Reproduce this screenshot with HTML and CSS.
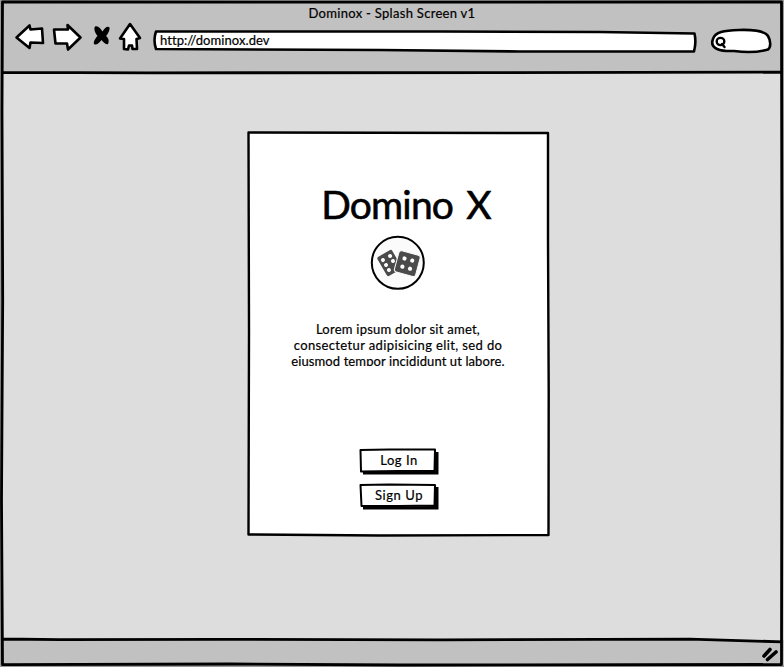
FILE: index.html
```html
<!DOCTYPE html>
<html lang="en">
<head>
<meta charset="utf-8">
<title>Dominox - Splash Screen v1</title>
<link rel="stylesheet" href="styles.css">
</head>
<body>
<div class="browser">
  <header class="chrome">
    <div class="window-title"><span>Dominox - Splash Screen v1</span></div>
    <div class="toolbar">
      <svg class="nav" width="144" height="34" viewBox="10 20 144 34">
        <g class="ink fill">
          <path d="M16.500 37.500 L29.500 25.500 L30.500 29.500 L42 28.500 L43 43 L30.500 42.500 L29.500 48 Z"/>
          <path d="M54 29.500 L68 29.500 L67.500 25 L80.500 37.500 L68 49.500 L67 43.500 L55.500 43.500 Z"/>
          <path d="M130 24 L140 38 L136.500 39 L137 49 L132.500 49 L132 45.500 L129 45.500 L128 49.500 L124 49 L124 39 L120 38.500 Z"/>
        </g>
        <path d="M95 26.500 C98 25 101 29 102.500 31.500 C105 27 108 25.500 109.500 27.500 C110 30 108 34 106 36 C108.500 38 109.500 41 108 44 C105.500 45 103.500 42 101.500 40 C99 43.500 96 45.500 94 44 C93 42 95.500 38 97.500 36 C95 33 93.500 29 95 26.500 Z"/>
      </svg>
      <div class="address">
        <svg class="sketch" width="546" height="26" viewBox="152 29 546 26">
          <path class="ink fill" d="M156 31.500 L440 31.500 L600 32 L694.500 33.500 Q696.500 42 694 51.500 L520 51.500 L380 50 L156 49 Q153 40 156 31.500 Z"/>
        </svg>
        <span class="url">http://dominox.dev</span>
      </div>
      <svg class="search" width="64" height="30" viewBox="710 27 64 30">
        <path class="ink fill" d="M713 39 C715 32 724 30.500 739 30 C755 29.500 765 31 768 36 C771 41 771 47 768 49.500 C758 52.500 745 52.500 734 51 C721 51.500 709 49 713 39 Z"/>
        <g class="lens"><ellipse cx="720.500" cy="41.500" rx="3.800" ry="3.600"/><path d="M722 44 L724.500 47"/></g>
      </svg>
    </div>
  </header>
  <main class="page">
    <section class="card">
      <svg class="sketch" width="304" height="406" viewBox="246 131 304 406">
        <path class="ink card-line" d="M248.500 132.500 L380 132.700 L548 133 L548 240 L548.700 390 L548.500 535 L380 535.500 L248.500 534.500 L249 330 Z"/>
      </svg>
      <h1>Domino X</h1>
      <svg class="logo" width="56" height="56" viewBox="370 235 56 56">
        <circle cx="397.800" cy="262.800" r="26" fill="#fbfbfb" stroke="#000" stroke-width="2"/>
        <g transform="translate(389.500 263) rotate(-30)"><rect class="die" x="-8.500" y="-11" width="17" height="22" rx="2"/>
          <g class="pip"><circle cx="-4.200" cy="-5.800" r="2"/><circle cx="4" cy="-5.800" r="2"/><circle cx="-4" cy="0" r="2"/><circle cx="4" cy="0" r="2"/><circle cx="-4" cy="5.800" r="2"/></g></g>
        <g transform="translate(407.300 263.600) rotate(15)"><rect class="die front" x="-11" y="-11" width="22" height="22" rx="2.500"/>
          <g class="pip"><circle cx="-4" cy="-4.200" r="2.100"/><circle cx="4" cy="-4.200" r="2.100"/><circle cx="-4" cy="4.200" r="2.100"/><circle cx="4" cy="4.200" r="2.100"/></g></g>
      </svg>
      <p class="intro">
        <span class="l1">Lorem ipsum dolor sit amet,</span>
        <span class="l2">consectetur adipisicing elit, sed do</span>
        <span class="l3">eiusmod tempor incididunt ut labore.</span>
      </p>
      <div class="actions">
        <button class="btn" type="button">
          <svg class="sketch" width="82" height="28" viewBox="0 0 82 28"><path d="M4 24 L76 23 L76 4 L79.500 4 L79.500 26.500 L4 26.500 Z"/><path class="btn-line" d="M1.500 2 L30 1.500 L76 1.500 L75.500 23 L40 23 L2 23.500 Z"/></svg>
          <span class="login">Log In</span>
        </button>
        <button class="btn" type="button">
          <svg class="sketch" width="82" height="28" viewBox="0 0 82 28"><path d="M4 24 L76 23 L76 4 L79.500 4 L79.500 26.500 L4 26.500 Z"/><path class="btn-line" d="M1.500 2 L30 1.500 L76 2 L75.500 22.500 L40 23 L2.500 23 Z"/></svg>
          <span class="signup">Sign Up</span>
        </button>
      </div>
    </section>
  </main>
  <footer class="status">
    <svg width="18" height="16" viewBox="761 647 18 16"><path class="grip" d="M764 656 L770 649.500 M767.500 659.500 L776 652"/></svg>
  </footer>
  <svg class="sketch" width="784" height="667" viewBox="0 0 784 667">
    <path class="edge" d="M0 0 H784 V667 H0 Z M2 2 V665 L784 665 L782 2 Z"/>
    <path class="ink frame" d="M2.500 2 L430 2.200 L781.500 2 L782 330 L781.500 664.500 L400 665 L230 664 L2.500 664.700 L1.500 500 L2.700 300 L2 110 Z M2.500 72.300 L150 72.800 L500 72.600 L781.500 72.200 M2.500 639 L60 639.600 L220 639.300 L440 639.800 L690 639.200 L781.500 641.800"/>
  </svg>
</div>
</body>
</html>
```
FILE: styles.css
```css
* { box-sizing: border-box; }
body { margin: 0; color: #000; font: 13px/16px Lato, "Liberation Sans", sans-serif; -webkit-text-stroke: .2px #000; overflow: hidden; }
.browser { position: relative; display: grid; grid-template-rows: 73px 1fr 27px; width: 784px; height: 667px; background: #ddd; }
.sketch { position: absolute; left: 0; top: 0; pointer-events: none; }
.ink { fill: none; stroke: #000; stroke-width: 2.6; stroke-linejoin: round; stroke-linecap: round; }
.fill, .ink.fill, .ink.card-line { fill: #fff; }
.ink.card-line { stroke-width: 2.4; }
.edge { fill: #999; fill-rule: evenodd; }
.frame { stroke-width: 2.8; }
.chrome { background: #c1c1c1; padding-top: 5px; }
.window-title { height: 15px; text-align: center; letter-spacing: .3px; }
.toolbar { display: flex; height: 37px; padding-left: 10px; align-items: flex-start; }
.nav { flex: none; }
.address { position: relative; flex: none; width: 546px; height: 26px; margin: 9px 12px 0 -2px; padding: 3px 0 0 8px; }
.url { position: relative; letter-spacing: .07px; }
.search { flex: none; margin-top: 7px; }
.lens { fill: #fff; stroke: #000; stroke-width: 2.4; stroke-linecap: round; }
.page { padding: 58px 0 0 246px; }
.card { position: relative; display: flex; flex-direction: column; align-items: center; width: 304px; height: 406px; padding-top: 47px; }
.card > :not(.sketch) { position: relative; }
h1 { margin: 0 -16px 0 0; height: 57px; font-size: 39px; line-height: 52px; font-weight: 400; letter-spacing: -.8px; word-spacing: 4px; white-space: nowrap; -webkit-text-stroke: .6px #000; }
.logo { flex: none; }
.die { fill: #4b4b4b; }
.front { stroke: #fbfbfb; stroke-width: 1; }
.pip { fill: #fff; }
.intro { display: flex; flex-direction: column; align-items: center; height: 45px; margin: 30px 0 0; overflow: hidden; white-space: nowrap; }
.l1, .l2, .l3 { flex: none; }
.l1 { letter-spacing: .25px; }
.l2 { letter-spacing: .38px; }
.l3 { letter-spacing: .1px; }
.actions { display: grid; gap: 7px; margin: 82px 0 0 4px; }
.btn { position: relative; width: 82px; height: 28px; padding: 0 2px 5px 0; border: 0; background: none; color: #000; font: inherit; letter-spacing: .55px; }
.btn span { position: relative; }
.btn-line { fill: #fff; stroke: #000; stroke-width: 2; stroke-linejoin: round; }
.status { display: flex; justify-content: flex-end; padding: 7px 5px 0 0; background: #c1c1c1; }
.grip { fill: none; stroke: #000; stroke-width: 3.6; stroke-linecap: round; }
```
